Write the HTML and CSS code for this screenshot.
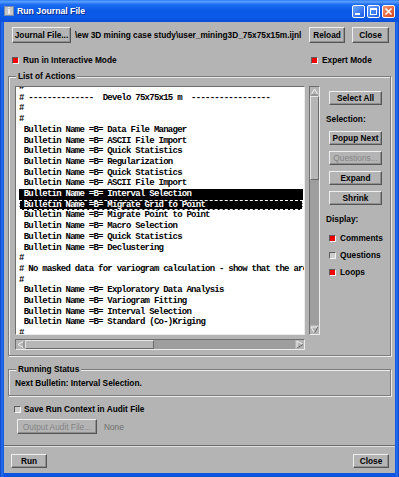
FILE: index.html
```html
<!DOCTYPE html>
<html lang="en">
<head>
    <meta charset="UTF-8">
    <title>Run Journal File</title>
    <link rel="stylesheet" href="styles.css">
</head>
<body>
<div class="window">
    <header class="titlebar">
        <span class="app-icon">i</span>
        <span class="title">Run Journal File</span>
        <div class="win-buttons">
            <span class="win-btn">
                <svg width="11" height="11" viewBox="0 0 11 11"><rect x="2" y="7" width="5" height="2" fill="#fff"/></svg>
            </span>
            <span class="win-btn">
                <svg width="11" height="11" viewBox="0 0 11 11"><rect x="2.5" y="2.5" width="6" height="6" fill="none" stroke="#fff"/><rect x="2" y="2" width="7" height="2" fill="#fff"/></svg>
            </span>
            <span class="win-btn win-close">
                <svg width="11" height="11" viewBox="0 0 11 11"><path d="M2.5 2.5 L8.5 8.5 M8.5 2.5 L2.5 8.5" stroke="#fff" stroke-width="1.6"/></svg>
            </span>
        </div>
    </header>

    <main class="client">
        <div class="file-row">
            <button class="btn btn-journal">Journal File...</button>
            <span class="file-path">\ew 3D mining case study\user_mining3D_75x75x15m.ijnl</span>
            <button class="btn btn-reload">Reload</button>
            <button class="btn btn-close-top">Close</button>
        </div>

        <div class="mode-row">
            <label class="check"><span class="box on"></span>Run in Interactive Mode</label>
            <label class="check check-expert"><span class="box on"></span>Expert Mode</label>
        </div>

        <section class="group group-actions">
            <span class="group-title">List of Actions</span>
            <div class="actions-body">
                <div class="list-pane">
                    <div class="list-top">
                        <div class="list-box">
                            <div class="list-lines">
                                <div class="line">#</div>
                                <div class="line"># --------------  Develo 75x75x15 m  -----------------</div>
                                <div class="line">#</div>
                                <div class="line">#</div>
                                <div class="line"> Bulletin Name =B= Data File Manager</div>
                                <div class="line"> Bulletin Name =B= ASCII File Import</div>
                                <div class="line"> Bulletin Name =B= Quick Statistics</div>
                                <div class="line"> Bulletin Name =B= Regularization</div>
                                <div class="line"> Bulletin Name =B= Quick Statistics</div>
                                <div class="line"> Bulletin Name =B= ASCII File Import</div>
                                <div class="line sel"> Bulletin Name =B= Interval Selection</div>
                                <div class="line sel focus"> Bulletin Name =B= Migrate Grid to Point</div>
                                <div class="line"> Bulletin Name =B= Migrate Point to Point</div>
                                <div class="line"> Bulletin Name =B= Macro Selection</div>
                                <div class="line"> Bulletin Name =B= Quick Statistics</div>
                                <div class="line"> Bulletin Name =B= Declustering</div>
                                <div class="line">#</div>
                                <div class="line"># No masked data for variogram calculation - show that the area is empty</div>
                                <div class="line">#</div>
                                <div class="line"> Bulletin Name =B= Exploratory Data Analysis</div>
                                <div class="line"> Bulletin Name =B= Variogram Fitting</div>
                                <div class="line"> Bulletin Name =B= Interval Selection</div>
                                <div class="line"> Bulletin Name =B= Standard (Co-)Kriging</div>
                                <div class="line">#</div>
                            </div>
                        </div>
                        <div class="vscroll">
                            <span class="arrow">
                                <svg width="9" height="8" viewBox="0 0 9 8"><path d="M4.5 1 L8 7 L1 7 Z" fill="#b4b4b4" stroke="#f2f2f2"/><path d="M8 7 L1 7" stroke="#5a5a5a"/></svg>
                            </span>
                            <span class="thumb-v"></span>
                            <span class="track"></span>
                            <span class="arrow">
                                <svg width="9" height="8" viewBox="0 0 9 8"><path d="M1 1 L8 1 L4.5 7 Z" fill="#b4b4b4" stroke="#f2f2f2"/><path d="M8 1 L4.5 7" stroke="#5a5a5a"/></svg>
                            </span>
                        </div>
                    </div>
                    <div class="hscroll">
                        <span class="arrow">
                            <svg width="8" height="9" viewBox="0 0 8 9"><path d="M1 4.5 L7 1 L7 8 Z" fill="#b4b4b4" stroke="#f2f2f2"/><path d="M7 1 L7 8" stroke="#5a5a5a"/></svg>
                        </span>
                        <span class="thumb-h"></span>
                        <span class="track"></span>
                        <span class="arrow">
                            <svg width="8" height="9" viewBox="0 0 8 9"><path d="M1 1 L7 4.5 L1 8 Z" fill="#b4b4b4" stroke="#f2f2f2"/><path d="M7 4.5 L1 8" stroke="#5a5a5a"/></svg>
                        </span>
                    </div>
                </div>

                <div class="side-panel">
                    <button class="btn btn-side">Select All</button>
                    <span class="side-label">Selection:</span>
                    <button class="btn btn-side btn-popup">Popup Next</button>
                    <button class="btn btn-side btn-gap disabled">Questions...</button>
                    <button class="btn btn-side btn-gap">Expand</button>
                    <button class="btn btn-side btn-gap">Shrink</button>
                    <span class="side-label">Display:</span>
                    <label class="check side-check first"><span class="box on"></span>Comments</label>
                    <label class="check side-check"><span class="box"></span>Questions</label>
                    <label class="check side-check"><span class="box on"></span>Loops</label>
                </div>
            </div>
        </section>

        <section class="group group-status">
            <span class="group-title">Running Status</span>
            <span class="status-text">Next Bulletin: Interval Selection.</span>
        </section>

        <label class="check save-row"><span class="box"></span>Save Run Context in Audit File</label>

        <div class="audit-row">
            <button class="btn btn-audit disabled">Output Audit File...</button>
            <span class="audit-name">None</span>
        </div>

        <div class="separator"></div>

        <div class="footer">
            <button class="btn btn-foot">Run</button>
            <button class="btn btn-foot">Close</button>
        </div>
    </main>
</div>
</body>
</html>
```

FILE: styles.css
```css
* {
    margin: 0;
    padding: 0;
    box-sizing: border-box;
}

body {
    width: 399px;
    height: 477px;
    overflow: hidden;
    font-family: 'Liberation Sans', Arial, sans-serif;
    font-size: 8.3px;
    font-weight: bold;
    color: #000;
    background: #0c52d9;
}

.window {
    width: 399px;
    height: 477px;
    display: flex;
    flex-direction: column;
    background: linear-gradient(to right, #0a45c4 0, #2a6ff0 2px, #0d55df 4px, #0d55df 395px, #2a6ff0 397px, #0a45c4 399px);
}

/* title bar */
.titlebar {
    height: 22px;
    display: flex;
    align-items: center;
    padding: 0 4px;
    background: linear-gradient(to bottom, #2e7cf6 0%, #5aa0ff 8%, #1d6df2 20%, #0a58e6 50%, #0b5ae8 80%, #0a4fd8 100%);
}

.app-icon {
    width: 10px;
    height: 10px;
    display: flex;
    align-items: center;
    justify-content: center;
    background: #c4c4c4;
    border: 1px solid #7c8ca8;
    color: #fff;
    font-size: 9px;
    line-height: 8px;
}

.title {
    margin-left: 3px;
    color: #fff;
    font-size: 8.7px;
    text-shadow: 1px 1px 0 #0a2f8a;
}

.win-buttons {
    margin-left: auto;
    display: flex;
    gap: 2px;
}

.win-btn {
    width: 13px;
    height: 13px;
    display: flex;
    align-items: center;
    justify-content: center;
    border: 1px solid #fff;
    border-radius: 2px;
    background: linear-gradient(135deg, #6aa6ff, #1a5ce6);
}

.win-close {
    background: linear-gradient(135deg, #f29a74, #d2421b);
}

/* client area */
.client {
    flex: 1;
    margin: 0 4px 4px;
    background: #b4b4b4;
    display: flex;
    flex-direction: column;
}

.btn {
    display: flex;
    align-items: center;
    justify-content: center;
    height: 16px;
    padding: 0;
    background: #b4b4b4;
    border: 1px solid;
    border-color: #efefef #555 #555 #efefef;
    box-shadow: inset -1px -1px 0 #8e8e8e;
    font: inherit;
    color: #000;
    white-space: nowrap;
}

.btn.disabled {
    color: #858585;
    font-weight: normal;
}

.file-row {
    display: flex;
    align-items: center;
    height: 16px;
    margin-top: 5px;
    padding: 0 6px 0 8px;
}

.btn-journal {
    width: 59px;
}

.file-path {
    flex: 1;
    margin-left: 4px;
    overflow: hidden;
    white-space: nowrap;
}

.btn-reload {
    width: 36px;
    margin-left: 4px;
}

.btn-close-top {
    width: 37px;
    margin-left: 7px;
}

.mode-row {
    display: flex;
    align-items: center;
    height: 12px;
    margin-top: 11px;
    padding: 0 22px 0 8px;
}

.check {
    display: flex;
    align-items: center;
    gap: 4px;
    line-height: 10px;
    white-space: nowrap;
}

.check-expert {
    margin-left: auto;
    width: 62px;
}

.box {
    width: 7px;
    height: 7px;
    flex: none;
    border: 1px solid;
    border-color: #5c5c5c #f4f4f4 #f4f4f4 #5c5c5c;
    background: #cdcdcd;
}

.box.on {
    background: #f00000;
}

/* group boxes */
.group {
    margin: 0 4px;
    border: 1px solid #7c7c7c;
    box-shadow: 1px 1px 0 #ececec, inset 1px 1px 0 #ececec;
    display: flex;
    flex-direction: column;
}

.group-title {
    align-self: flex-start;
    margin: -6px 0 0 7px;
    padding: 0 2px;
    line-height: 10px;
    background: #b4b4b4;
}

.group-actions {
    margin-top: 10px;
}

.actions-body {
    display: flex;
    padding: 5px 0 5px 6px;
}

.list-top {
    display: flex;
}

.list-box {
    width: 290px;
    height: 249px;
    overflow: hidden;
    background: #fff;
    border: 1px solid;
    border-color: #6e6e6e #ececec #ececec #6e6e6e;
}

.list-lines {
    margin-top: -5px;
    font-family: 'Liberation Mono', 'DejaVu Sans Mono', monospace;
    font-size: 9px;
    font-weight: bold;
    letter-spacing: -0.75px;
    line-height: 10.7px;
}

.line {
    margin: 0 1px 0 3px;
    white-space: pre;
}

.line.sel {
    background: #000;
    color: #fff;
}

.line.focus {
    outline: 1px dashed #fff;
    outline-offset: -1px;
}

/* scrollbars */
.vscroll,
.hscroll {
    display: flex;
    background: #9e9e9e;
    border: 1px solid;
    border-color: #6e6e6e #ececec #ececec #6e6e6e;
}

.vscroll {
    width: 11px;
    height: 249px;
    margin-left: 4px;
    flex-direction: column;
}

.hscroll {
    width: 290px;
    height: 11px;
    margin-top: 4px;
}

.arrow {
    flex: none;
    display: flex;
    align-items: center;
    justify-content: center;
    width: 9px;
    height: 9px;
    background: #b4b4b4;
}

.thumb-v,
.thumb-h {
    flex: none;
    background: #b6b6b6;
    border: 1px solid;
    border-color: #e6e6e6 #6a6a6a #6a6a6a #e6e6e6;
}

.thumb-v {
    height: 84px;
}

.thumb-h {
    width: 129px;
}

.track {
    flex: 1;
}

/* right column */
.side-panel {
    display: flex;
    flex-direction: column;
    margin: 5px 0 0 6px;
}

.btn-side {
    width: 53px;
    height: 14px;
    margin-left: 3px;
}

.side-label {
    margin-top: 9px;
    line-height: 10px;
}

.btn-popup {
    margin-top: 7px;
}

.btn-gap {
    margin-top: 6px;
}

.side-check {
    margin: 7px 0 0 3px;
}

.side-check.first {
    margin-top: 9px;
}

.group-status {
    margin-top: 13px;
}

.status-text {
    margin: 4px 0 7px 6px;
    line-height: 10px;
}

.save-row {
    margin: 8px 0 0 10px;
    gap: 3px;
}

.audit-row {
    display: flex;
    align-items: center;
    margin: 5px 0 0 13px;
}

.btn-audit {
    width: 80px;
    height: 15px;
}

.audit-name {
    margin-left: 7px;
    color: #6e6e6e;
    font-weight: normal;
}

.separator {
    margin-top: 11px;
    border-top: 1px solid #6a6a6a;
    border-bottom: 1px solid #e2e2e2;
}

.footer {
    display: flex;
    justify-content: space-between;
    margin-top: 7px;
    padding: 0 6px 0 7px;
}

.btn-foot {
    width: 36px;
    height: 14px;
}
```
